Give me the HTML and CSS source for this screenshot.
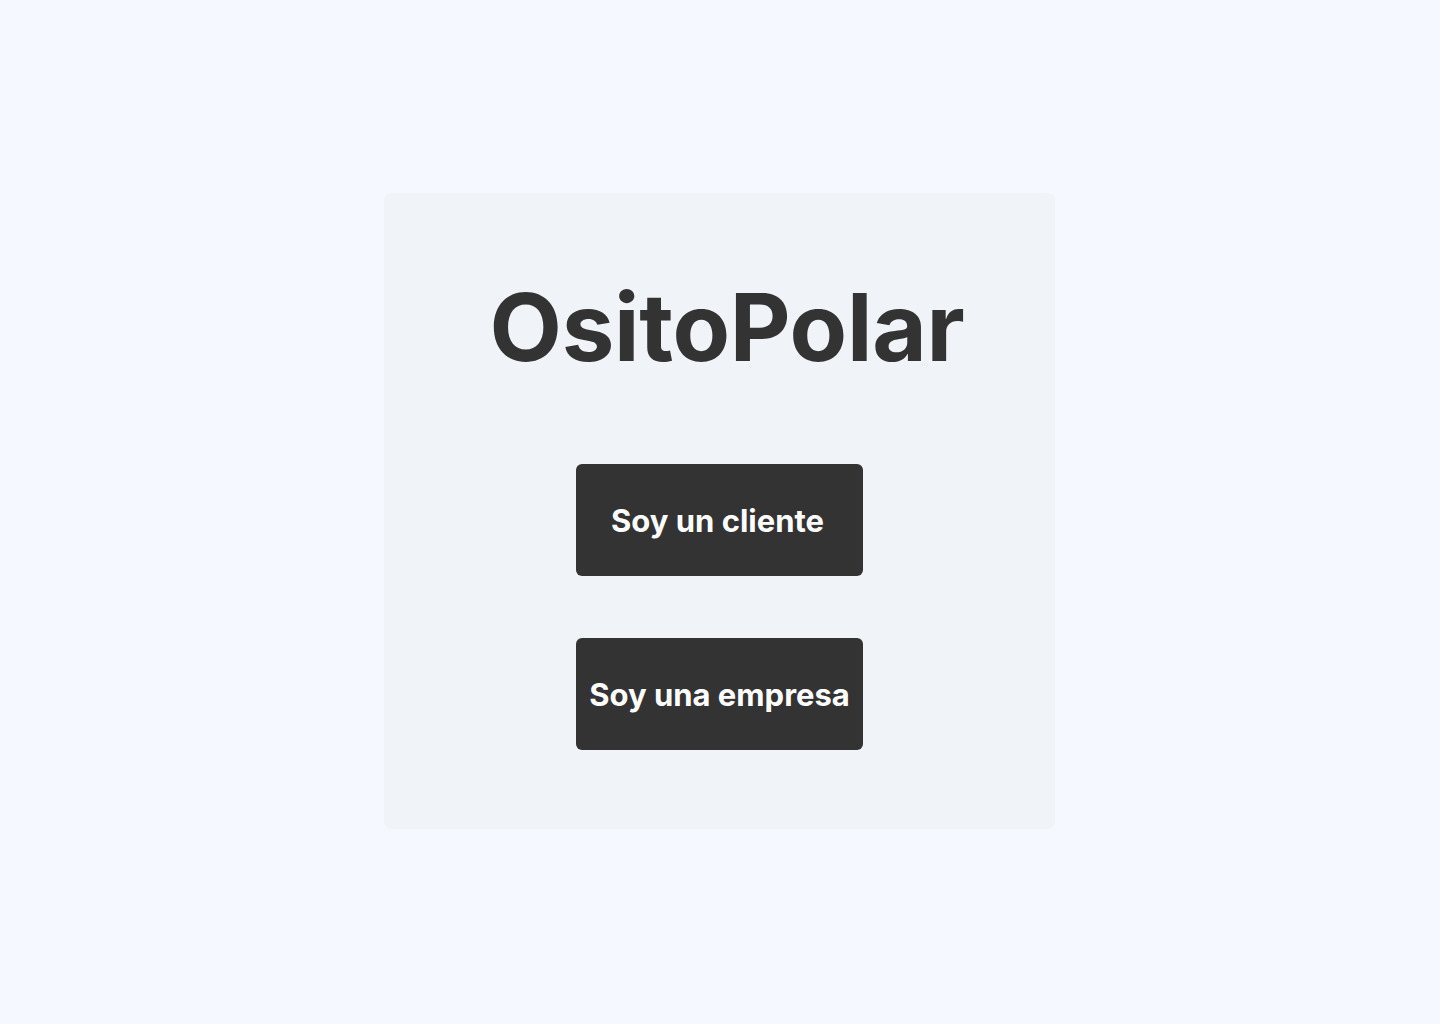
FILE: index.html
```html
<!DOCTYPE html>
<html lang="es">
<head>
<meta charset="utf-8">
<title>OsitoPolar</title>
<link rel="stylesheet" href="styles.css">
</head>
<body>
<main class="page">
  <section class="card">
    <h1 class="title">OsitoPolar</h1>
    <div class="actions">
      <button class="btn btn-client">Soy un cliente</button>
      <button class="btn">Soy una empresa</button>
    </div>
  </section>
</main>
</body>
</html>
```

FILE: styles.css
```css
* { box-sizing: border-box; }
html, body { margin: 0; padding: 0; }
body {
  background: #f5f8fe;
  font-family: Inter, "Noto Sans", sans-serif;
  color: #333333;
}
.page {
  min-height: 1022px;
  padding-right: 1px;
  display: flex;
  align-items: center;
  justify-content: center;
}
.card {
  width: 671px;
  height: 636px;
  background: #f0f4f9;
  border-radius: 8px;
  display: flex;
  flex-direction: column;
  align-items: center;
  padding-top: 76px;
}
.title {
  margin: 0;
  padding-left: 15px;
  font-size: 94px;
  font-weight: 700;
  line-height: 116px;
  letter-spacing: -0.3px;
  color: #333333;
}
.actions {
  margin-top: 79px;
  display: flex;
  flex-direction: column;
  align-items: center;
  gap: 62px;
}
.btn {
  width: 287px;
  height: 112px;
  border: none;
  border-radius: 6px;
  background: #333333;
  color: #ffffff;
  font-family: Inter, "Noto Sans", sans-serif;
  font-size: 31px;
  font-weight: 700;
  padding: 0;
  cursor: pointer;
}
.btn-client {
  padding-right: 4px;
}
```
